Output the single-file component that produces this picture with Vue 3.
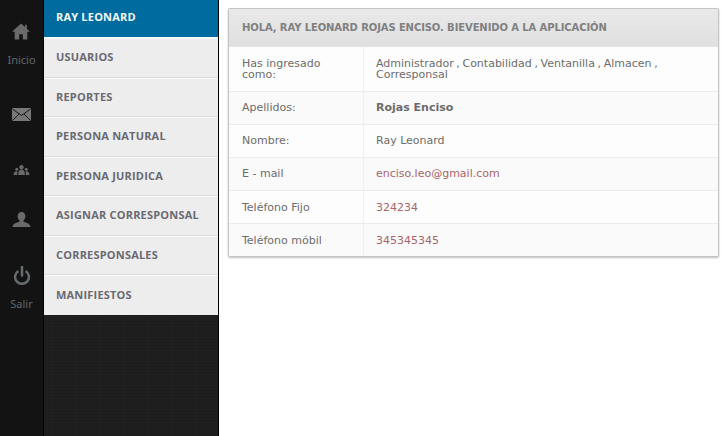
<script setup>
const menu = ['RAY LEONARD','USUARIOS','REPORTES','PERSONA NATURAL','PERSONA JURIDICA','ASIGNAR CORRESPONSAL','CORRESPONSALES','MANIFIESTOS']
const rows = [
  { label: 'Has ingresado como:', value: 'Administrador , Contabilidad , Ventanilla , Almacen , Corresponsal', cls: 'tall' },
  { label: 'Apellidos:', value: 'Rojas Enciso', cls: 'strong' },
  { label: 'Nombre:', value: 'Ray Leonard', cls: '' },
  { label: 'E - mail', value: 'enciso.leo@gmail.com', cls: 'link' },
  { label: 'Teléfono Fijo', value: '324234', cls: 'link' },
  { label: 'Teléfono móbil', value: '345345345', cls: 'link' },
]
</script>

<template>
  <div class="page">
    <nav class="rail">
      <a class="rail-item home">
        <svg width="18" height="17" viewBox="0 0 20 18"><path d="M10 0 L14.5 4 V1.5 H16.5 V6 L20 9.3 H17 V18 H12 V12 H8 V18 H3 V9.3 H0 Z" fill="#6a6a6a"/></svg>
        <span>Inicio</span>
      </a>
      <a class="rail-item mail">
        <svg width="19" height="13" viewBox="0 0 19 13"><rect width="19" height="13" rx="1" fill="#777"/><path d="M0.5 1 L9.5 7.5 L18.5 1 M0.5 12.5 L7 6 M18.5 12.5 L12 6" stroke="#161616" stroke-width="1" fill="none"/></svg>
      </a>
      <a class="rail-item group">
        <svg width="19" height="10" viewBox="0 0 19 12"><g fill="#6a6a6a"><circle cx="9.5" cy="2.6" r="2.6"/><path d="M5.5 12 C5.5 7.5 7 5.5 9.5 5.5 S13.5 7.5 13.5 12 Z"/><circle cx="3.8" cy="5" r="1.8"/><path d="M0 12 C0 9 1.5 7.5 3.8 7.5 L4.8 8 C4.4 9.5 4.3 10.5 4.3 12 Z"/><circle cx="15.2" cy="5" r="1.8"/><path d="M19 12 C19 9 17.5 7.5 15.2 7.5 L14.2 8 C14.6 9.5 14.7 10.5 14.7 12 Z"/></g></svg>
      </a>
      <a class="rail-item user">
        <svg width="19" height="15" viewBox="0 0 19 16"><path d="M9.5 0 C12.2 0 13.6 2 13.6 4.6 C13.6 6.8 12.6 8.3 11.6 9.2 V10.4 C14.8 11.2 19 12.5 19 16 H0 C0 12.5 4.2 11.2 7.4 10.4 V9.2 C6.4 8.3 5.4 6.8 5.4 4.6 C5.4 2 6.8 0 9.5 0 Z" fill="#6a6a6a"/></svg>
      </a>
      <a class="rail-item power">
        <svg width="18" height="19" viewBox="0 0 18 20"><g fill="none" stroke="#666c70" stroke-width="2.6"><path d="M5.2 5.2 A7.3 7.3 0 1 0 12.8 5.2"/><path d="M9 0 V10" stroke-linecap="round"/></g></svg>
        <span>Salir</span>
      </a>
    </nav>

    <aside class="menu">
      <ul>
        <li v-for="(m, i) in menu" :key="m" :class="{ active: i === 0 }">{{ m }}</li>
      </ul>
    </aside>

    <main class="content">
      <section class="card">
        <h1>HOLA, RAY LEONARD ROJAS ENCISO. BIEVENIDO A LA APLICACIÓN</h1>
        <div v-for="r in rows" :key="r.label" class="row" :class="{ tall: r.cls === 'tall' }">
          <div class="label">{{ r.label }}</div>
          <div class="value" :class="r.cls">{{ r.value }}</div>
        </div>
      </section>
    </main>
  </div>
</template>

<style>
html, body { margin: 0; background: #fff; }
</style>

<style scoped>
.page {
  display: flex;
  width: 725px;
  height: 436px;
  overflow: hidden;
  font-family: "DejaVu Sans", sans-serif;
  background: #fff;
}
.rail {
  width: 43px;
  flex: none;
  border-right: 1px solid #000;
  background-color: #131313;
  display: flex;
  flex-direction: column;
  align-items: center;
}
.rail-item {
  display: flex;
  flex-direction: column;
  align-items: center;
  color: #62676b;
  font: 11px/14px "Noto Sans", sans-serif;
}
.rail-item svg { display: block; }
.home { margin-top: 23px; }
.home span { margin-top: 13px; }
.mail { margin-top: 41px; }
.group { margin-top: 44px; }
.user { margin-top: 37px; }
.power { margin-top: 39px; }
.power span { margin-top: 12px; }
.menu {
  width: 174px;
  flex: none;
  border-right: 1px solid #000;
  background-color: #1e1e1e;
  background-image:
    repeating-linear-gradient(0deg, rgba(0,0,0,.07) 0 1px, transparent 1px 3px),
    repeating-linear-gradient(90deg, rgba(255,255,255,.012) 0 1px, transparent 1px 3px);
}
.menu ul { list-style: none; margin: 0; padding: 0; }
.menu li {
  box-sizing: border-box;
  height: 39.55px;
  padding: 10px 12px 0;
  background: #ededed;
  border-top: 1px solid #fafafa;
  border-bottom: 1px solid #dcdcdc;
  color: #6a6a72;
  font: 700 11px/15px "Open Sans", sans-serif;
  letter-spacing: 0.2px;
  white-space: nowrap;
}
.menu li:first-child {
  height: 38px;
  padding-top: 9px;
  background: #006b9e;
  color: #f4f8fa;
  border-top: 0;
  border-bottom: 1px solid #fff;
}
.menu li:last-child { border-bottom: 0; height: 39.7px; padding-top: 11px; }
.content {
  flex: 1;
  padding: 8px 6px 0 9px;
  min-width: 0;
}
.card {
  box-sizing: border-box;
  width: 491px;
  height: 249px;
  border: 1px solid #c4c4c4;
  background: #fff;
  box-shadow: 0 1px 2px rgba(0,0,0,.25);
  border-radius: 2px;
}
h1 {
  margin: 0;
  box-sizing: border-box;
  height: 38px;
  padding: 0 13px;
  background: linear-gradient(#e9e9e9, #e0e0e0);
  border-bottom: 1px solid #e4e4e4;
  color: #808080;
  font: 700 10px/37px "DejaVu Sans", sans-serif;
  letter-spacing: -0.1px;
  white-space: nowrap;
}
.row {
  display: grid;
  grid-template-columns: 135px 1fr;
  height: 33px;
  box-sizing: border-box;
  border-bottom: 1px solid #ececec;
  background: #fdfdfd;
  color: #6c6c6c;
  font-size: 11px;
  line-height: 11px;
}
.row:last-child { border-bottom: 0; height: 32px; }
.row:nth-child(odd) { background: #fafafa; }
.row.tall { height: 45px; }
.label, .value {
  display: flex;
  align-items: center;
  padding: 0 13px;
}
.value { padding-left: 12px; }
.value.tall { word-spacing: -0.85px; }
.row:nth-child(3) > div, .row:nth-child(4) > div, .row:nth-child(5) > div { padding-bottom: 2px; }
.label { border-right: 1px solid #f0f0f0; }
.value.strong { font-weight: 700; }
.value.link { color: #a8666a; }
</style>
